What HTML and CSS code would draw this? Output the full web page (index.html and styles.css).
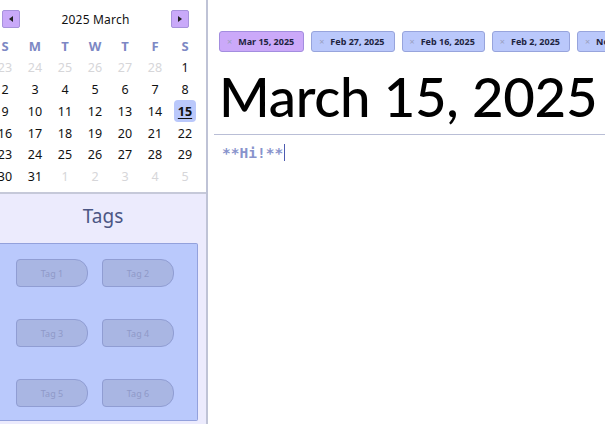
FILE: index.html
```html
<!DOCTYPE html>
<html>
<head>
<meta charset="utf-8">
<link rel="stylesheet" href="styles.css">
</head>
<body>
<div class="app">
  <aside class="sidebar">
    <section class="calendar">
      <div class="cal-head">
        <button class="nav-btn"><span class="tri-left"></span></button>
        <div class="cal-title">2025 March</div>
        <button class="nav-btn"><span class="tri-right"></span></button>
      </div>
      <div class="cal-grid">
        <div class="dow">S</div><div class="dow">M</div><div class="dow">T</div><div class="dow">W</div><div class="dow">T</div><div class="dow">F</div><div class="dow">S</div>
        <div class="day muted">23</div><div class="day muted">24</div><div class="day muted">25</div><div class="day muted">26</div><div class="day muted">27</div><div class="day muted">28</div><div class="day">1</div>
        <div class="day">2</div><div class="day">3</div><div class="day">4</div><div class="day">5</div><div class="day">6</div><div class="day">7</div><div class="day">8</div>
        <div class="day">9</div><div class="day">10</div><div class="day">11</div><div class="day">12</div><div class="day">13</div><div class="day">14</div><div class="day"><span class="selected">15</span></div>
        <div class="day">16</div><div class="day">17</div><div class="day">18</div><div class="day">19</div><div class="day">20</div><div class="day">21</div><div class="day">22</div>
        <div class="day">23</div><div class="day">24</div><div class="day">25</div><div class="day">26</div><div class="day">27</div><div class="day">28</div><div class="day">29</div>
        <div class="day">30</div><div class="day">31</div><div class="day muted">1</div><div class="day muted">2</div><div class="day muted">3</div><div class="day muted">4</div><div class="day muted">5</div>
      </div>
    </section>
    <section class="tags">
      <h2 class="tags-title">Tags</h2>
      <div class="tag-panel">
        <div class="tag">Tag 1</div>
        <div class="tag">Tag 2</div>
        <div class="tag">Tag 3</div>
        <div class="tag">Tag 4</div>
        <div class="tag">Tag 5</div>
        <div class="tag">Tag 6</div>
      </div>
    </section>
  </aside>
  <main class="main">
    <div class="tabs">
      <div class="tab active"><span class="x">×</span>Mar 15, 2025</div>
      <div class="tab"><span class="x">×</span>Feb 27, 2025</div>
      <div class="tab"><span class="x">×</span>Feb 16, 2025</div>
      <div class="tab"><span class="x">×</span>Feb 2, 2025</div>
      <div class="tab"><span class="x">×</span>Nov 30, 2024</div>
    </div>
    <h1 class="title">March 15, 2025</h1>
    <div class="editor"><span class="md">**Hi!**</span><span class="caret"></span></div>
  </main>
</div>
</body>
</html>
```
FILE: styles.css
```css
html, body {
  margin: 0;
  padding: 0;
  background: #ffffff;
  overflow: hidden;
}
body {
  font-family: "Noto Sans", "Open Sans", sans-serif;
  width: 605px;
  height: 424px;
}
.app {
  display: flex;
  height: 424px;
}
.sidebar {
  width: 206px;
  flex: none;
  border-right: 2px solid #bfc3d6;
  display: flex;
  flex-direction: column;
  overflow: hidden;
}
.calendar {
  height: 192px;
  flex: none;
  background: #ffffff;
  border-bottom: 2px solid #c6c9d9;
  box-sizing: content-box;
}
.cal-head {
  display: flex;
  align-items: center;
  justify-content: space-between;
  padding: 10px 17px 0 2px;
  height: 18px;
}
.nav-btn {
  width: 18px;
  height: 18px;
  padding: 0;
  margin: 0;
  background: #c9a9f9;
  border: 1px solid #a792dc;
  border-radius: 2px;
  display: flex;
  align-items: center;
  justify-content: center;
}
.tri-left {
  width: 0;
  height: 0;
  border-top: 3px solid transparent;
  border-bottom: 3px solid transparent;
  border-right: 4px solid #222;
}
.tri-right {
  width: 0;
  height: 0;
  border-top: 3px solid transparent;
  border-bottom: 3px solid transparent;
  border-left: 4px solid #222;
}
.cal-title {
  font-size: 12px;
  color: #111;
  letter-spacing: 0.2px;
}
.cal-grid {
  display: grid;
  grid-template-columns: repeat(7, 30px);
  grid-auto-rows: 21.8px;
  margin-left: -10px;
  margin-top: 7px;
}
.dow {
  text-align: center;
  font-size: 13px;
  font-weight: bold;
  color: #7d88c4;
  line-height: 22px;
  margin-bottom: 3px;
}
.day {
  display: flex;
  align-items: center;
  justify-content: center;
  font-size: 12.5px;
  color: #111;
}
.day.muted {
  color: #d6d6d9;
}
.selected {
  display: flex;
  align-items: center;
  justify-content: center;
  width: 22px;
  height: 22px;
  border-radius: 4px;
  background: #bac8fb;
  font-weight: bold;
  text-decoration: underline;
  text-underline-offset: 2px;
}
.tags {
  flex: 1;
  background: #ecebfd;
  display: flex;
  flex-direction: column;
}
.tags-title {
  margin: 0;
  font-weight: normal;
  font-size: 19px;
  color: #4b5684;
  text-align: center;
  height: 49px;
  line-height: 44px;
  padding-left: 0;
}
.tag-panel {
  margin-right: 8px;
  height: 178px;
  background: #bac9fc;
  border: 1px solid #93a1dc;
  border-left: none;
  border-radius: 0 2px 2px 0;
  display: grid;
  grid-template-columns: 72px 72px;
  grid-auto-rows: 28px;
  column-gap: 14px;
  row-gap: 32px;
  padding: 15px 0 0 16px;
  box-sizing: border-box;
}
.tag {
  background: #a9b6e3;
  border: 1px solid #909dd3;
  border-radius: 4px 13px 13px 4px;
  color: #8f99c8;
  font-size: 9px;
  display: flex;
  align-items: center;
  justify-content: center;
  box-sizing: border-box;
}
.main {
  flex: 1;
  min-width: 0;
  padding-top: 31px;
  overflow: hidden;
}
.tabs {
  display: flex;
  gap: 7px;
  padding-left: 11px;
  white-space: nowrap;
}
.tab {
  flex: none;
  height: 21px;
  box-sizing: border-box;
  padding: 0 9px 0 7px;
  background: #bac8fb;
  border: 1px solid #97a4dc;
  border-radius: 3px;
  font-size: 9px;
  font-weight: bold;
  color: #1d2340;
  display: flex;
  align-items: center;
}
.tab.active {
  background: #cba9f9;
  border-color: #a38ddf;
}
.tab .x {
  color: #9aa0bf;
  font-weight: normal;
  margin-right: 6px;
  font-size: 9px;
}
.title {
  margin: 10px 0 0 11px;
  font-family: "Lato", "Noto Sans", sans-serif;
  font-weight: 500;
  font-size: 54.5px;
  letter-spacing: -0.3px;
  line-height: 68px;
  color: #000;
  white-space: nowrap;
}
.editor {
  border-top: 1px solid #b9bed6;
  margin-left: 6px;
  margin-top: 4px;
  padding: 9px 0 0 8px;
  display: flex;
  align-items: center;
}
.md {
  font-family: "DejaVu Sans Mono", "Liberation Mono", monospace;
  font-size: 14.5px;
  color: #8893cc;
  font-weight: bold;
}
.caret {
  display: inline-block;
  width: 1px;
  height: 17px;
  background: #4d5bb0;
  margin-left: 1px;
}
```
